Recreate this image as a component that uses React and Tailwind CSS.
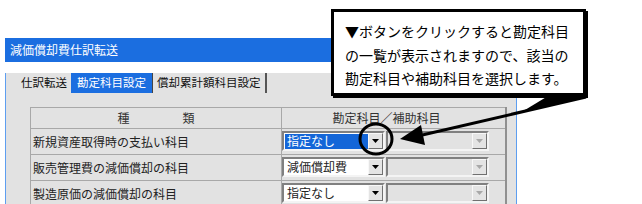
import React from "react";

const rows = [
  { label: "新規資産取得時の支払い科目", value: "指定なし", selected: true },
  { label: "販売管理費の減価償却の科目", value: "減価償却費" },
  { label: "製造原価の減価償却の科目", value: "指定なし" },
];

function Arrow({ disabled }) {
  return (
    <svg width="7" height="4" viewBox="0 0 7 4">
      <polygon points="0,0 7,0 3.5,4" fill={disabled ? "#a8a8a8" : "#000"} />
    </svg>
  );
}

function Combo({ value, selected, disabled }) {
  return (
    <div className="flex h-[20px] w-[103px] border-2 border-t-[#808080] border-l-[#808080] border-b-[#f4f4f4] border-r-[#f4f4f4]">
      <div
        className={
          "flex flex-1 items-center overflow-hidden " +
          (disabled ? "bg-[#e2e2e2]" : "bg-white")
        }
      >
        {value ? (
          <span
            className={
              "ml-[1px] flex h-[15px] flex-1 items-center pl-[2px] text-[12px] leading-none " +
              (selected ? "bg-[#1466d8] text-white" : "text-[#222]")
            }
          >
            {value}
          </span>
        ) : null}
      </div>
      <div className="flex w-[15px] items-center justify-center border border-t-[#f8f8f8] border-l-[#f8f8f8] border-b-[#707070] border-r-[#707070] bg-[#e4e4e4]">
        <Arrow disabled={disabled} />
      </div>
    </div>
  );
}

export default function App() {
  return (
    <div className="relative h-[204px] w-[642px] overflow-hidden bg-white font-['Noto_Sans_CJK_JP','Noto_Sans',sans-serif]">
      <div className="pl-[5px] pt-[38px]">
        <div className="w-[512px]">
          <div className="flex h-[24px] items-center bg-[#1b6ee0] pl-[5px] text-[12px] text-white">
            減価償却費仕訳転送
          </div>
          <div className="h-[150px] border-x border-[#5d9ef0] bg-[#e2e2e2]">
            <div className="ml-[11px] mt-[11px] flex h-[20px] text-[11.5px] text-[#111]">
              <div className="flex items-center px-[4px]">仕訳転送</div>
              <div className="flex items-center border-r border-[#444] bg-[#1b6ee0] px-[6px] text-white">
                勘定科目設定
              </div>
              <div className="flex items-center border-r-2 border-[#555] px-[4px]">
                償却累計額科目設定
              </div>
            </div>
            <div className="ml-[24px] mt-[14px] w-[477px] border-r-2 border-[#909090]">
              <div className="flex h-[22px] border-y border-l border-[#a8a8a8] text-[12px] text-[#333]">
                <div className="flex w-[251px] items-center justify-center gap-[53px] border-r border-[#a8a8a8]">
                  <span>種</span>
                  <span>類</span>
                </div>
                <div className="flex flex-1 items-center justify-center pr-[14px]">
                  勘定科目／補助科目
                </div>
              </div>
              {rows.map((r) => (
                <div
                  key={r.label}
                  className="flex h-[26px] border-b border-l border-[#a8a8a8] text-[12px] text-[#222]"
                >
                  <div className="flex w-[251px] items-center border-r border-[#a8a8a8] pl-[2px]">
                    {r.label}
                  </div>
                  <div className="flex flex-1 items-start gap-[1px] pt-[2px]">
                    <Combo value={r.value} selected={r.selected} />
                    <Combo disabled />
                  </div>
                </div>
              ))}
            </div>
          </div>
        </div>
      </div>

      <svg
        className="pointer-events-none absolute left-0 top-0"
        width="642"
        height="204"
        viewBox="0 0 642 204"
      >
        <polygon points="548,96 588,96 520,113" fill="#000" />
        <line x1="586" y1="97" x2="418" y2="136" stroke="#000" strokeWidth="3" />
        <polygon points="400,139 421,125 425,145" fill="#000" />
        <ellipse cx="376" cy="139" rx="16" ry="15" fill="none" stroke="#000" strokeWidth="3" />
      </svg>

      <div className="absolute left-[331px] top-[9px] h-[87px] w-[255px] border-[3px] border-black bg-white pl-[11px] pt-[8px] text-[14px] leading-[23.5px] text-black shadow-[2px_2px_0_#000]">
        <div>▼ボタンをクリックすると勘定科目</div>
        <div>の一覧が表示されますので、該当の</div>
        <div>勘定科目や補助科目を選択します。</div>
      </div>
    </div>
  );
}
